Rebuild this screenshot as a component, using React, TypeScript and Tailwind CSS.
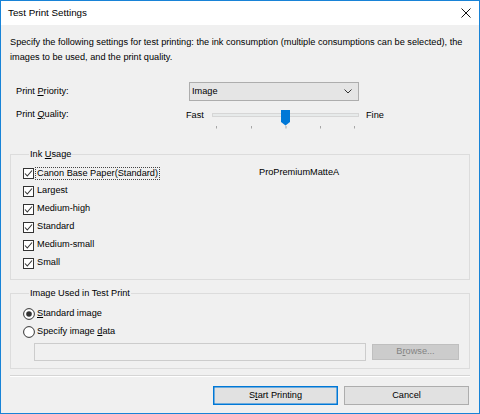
import React from 'react';

const font = { fontFamily: '"Liberation Sans", Arial, sans-serif' };

function CheckBox() {
  return (
    <svg width="11" height="11" viewBox="0 0 11 11" className="shrink-0">
      <rect x="0.5" y="0.5" width="10" height="10" fill="#fff" stroke="#333" />
      <polyline points="2,5.5 4.3,8 9,2.5" fill="none" stroke="#333" strokeWidth="1.1" />
    </svg>
  );
}

function Radio({ on }: { on?: boolean }) {
  return (
    <svg width="12" height="12" viewBox="0 0 12 12" className="shrink-0">
      <circle cx="6" cy="6" r="5.4" fill="#fff" stroke="#333" />
      {on && <circle cx="6" cy="6" r="2.8" fill="#333" />}
    </svg>
  );
}

function Slider() {
  const ticks = [4.5, 39.5, 74, 108.5, 142.5];
  return (
    <svg width="148" height="26" viewBox="0 0 148 26" className="shrink-0">
      <rect x="0.5" y="10.5" width="146" height="3" fill="#e7eaea" stroke="#d6d6d6" />
      {ticks.map((x) => (
        <line key={x} x1={x} y1="23" x2={x} y2="25.5" stroke="#a6a6a6" />
      ))}
      <path d="M69 7 H78 V19 L73.5 22.5 L69 19 Z" fill="#0078d7" />
    </svg>
  );
}

const inkRows = ['Largest', 'Medium-high', 'Standard', 'Medium-small', 'Small'];

export default function App() {
  return (
    <div
      className="w-[480px] h-[414px] flex flex-col bg-[#f0f0f0] border border-[#1883d7] text-[9.2px] text-black overflow-hidden"
      style={font}
    >
      {/* Title bar */}
      <div className="h-[24px] bg-white flex items-center justify-between pl-[7px] pr-[8px] shrink-0">
        <span className="text-[9.8px]">Test Print Settings</span>
        <svg width="10" height="10" viewBox="0 0 10 10">
          <path d="M0.5 0.5 L9.5 9.5 M9.5 0.5 L0.5 9.5" stroke="#111" strokeWidth="1" />
        </svg>
      </div>

      <div className="flex flex-col px-[9px]">
        <p className="pt-[10px] leading-[15px] whitespace-nowrap">
          Specify the following settings for test printing: the ink consumption (multiple consumptions can be selected), the
          <br />
          images to be used, and the print quality.
        </p>

        {/* Print Priority */}
        <div className="mt-[17px] flex items-center h-[19px]">
          <span className="ml-[6px] w-[173px]">
            <span>Print </span>
            <span className="underline">P</span>riority:
          </span>
          <div className="w-[170px] h-[19px] bg-[#e5e5e5] border border-[#adadad] flex items-center justify-between pl-[2px] pr-[6px]">
            <span>Image</span>
            <svg width="8" height="5" viewBox="0 0 8 5">
              <polyline points="0.5,0.5 4,4 7.5,0.5" fill="none" stroke="#333" />
            </svg>
          </div>
        </div>

        {/* Print Quality */}
        <div className="mt-[2px] flex items-start h-[26px]">
          <div className="ml-[6px] w-[170px] h-[24px] flex items-center">
            <span>
              Print <span className="underline">Q</span>uality:
            </span>
          </div>
          <div className="w-[26px] h-[24px] flex items-center mt-[1px]">Fast</div>
          <Slider />
          <div className="h-[24px] flex items-center mt-[1px] ml-[6px]">Fine</div>
        </div>

        {/* Ink Usage */}
        <fieldset className="mt-[19px] border border-[#dcdcdc] pl-[12px] pt-[3px] pb-[7px]">
          <legend className="ml-[6px] px-[1px] leading-[13px]">
            Ink <span className="underline">U</span>sage
          </legend>
          <div className="flex items-center h-[18px]">
            <div className="w-[236px] flex items-center gap-[2px]">
              <CheckBox />
              <span className="outline outline-1 outline-dotted outline-[#444] px-[1px] leading-[11px]">
                Canon Base Paper(Standard)
              </span>
            </div>
            <span>ProPremiumMatteA</span>
          </div>
          {inkRows.map((r) => (
            <div key={r} className="flex items-center h-[18px] gap-[3px]">
              <CheckBox />
              <span>{r}</span>
            </div>
          ))}
        </fieldset>

        {/* Image Used in Test Print */}
        <fieldset className="mt-[7px] border border-[#dcdcdc] pl-[12px] pt-[5px] pb-[7px]">
          <legend className="ml-[6px] px-[1px] leading-[13px]">Image Used in Test Print</legend>
          <div className="flex items-center h-[18px] gap-[2px]">
            <Radio on />
            <span>
              <span className="underline">S</span>tandard image
            </span>
          </div>
          <div className="flex items-center h-[18px] gap-[2px]">
            <Radio />
            <span>
              Specify image <span className="underline">d</span>ata
            </span>
          </div>
          <div className="mt-[2px] flex items-center gap-[6px] pl-[11px]">
            <div className="w-[332px] h-[18px] bg-[#f0f0f0] border border-[#cccccc]" />
            <div className="w-[87px] h-[16px] bg-[#cccccc] border border-[#bfbfbf] flex items-center justify-center text-[#838383]">
              <span>
                B<span className="underline">r</span>owse...
              </span>
            </div>
          </div>
        </fieldset>

        <div className="mt-[6px] h-[2px] border-t border-[#d5d5d5] border-b border-b-white" />

        <div className="mt-[9px] flex justify-end gap-[6px] pr-[1px]">
          <button className="w-[125px] h-[19px] bg-[#e1e1e1] border border-[#0078d7] shadow-[inset_0_0_0_0.5px_#0078d7] flex items-center justify-center">
            <span>
              S<span className="underline">t</span>art Printing
            </span>
          </button>
          <button className="w-[125px] h-[19px] bg-[#e1e1e1] border border-[#adadad] flex items-center justify-center">
            Cancel
          </button>
        </div>
      </div>
    </div>
  );
}
